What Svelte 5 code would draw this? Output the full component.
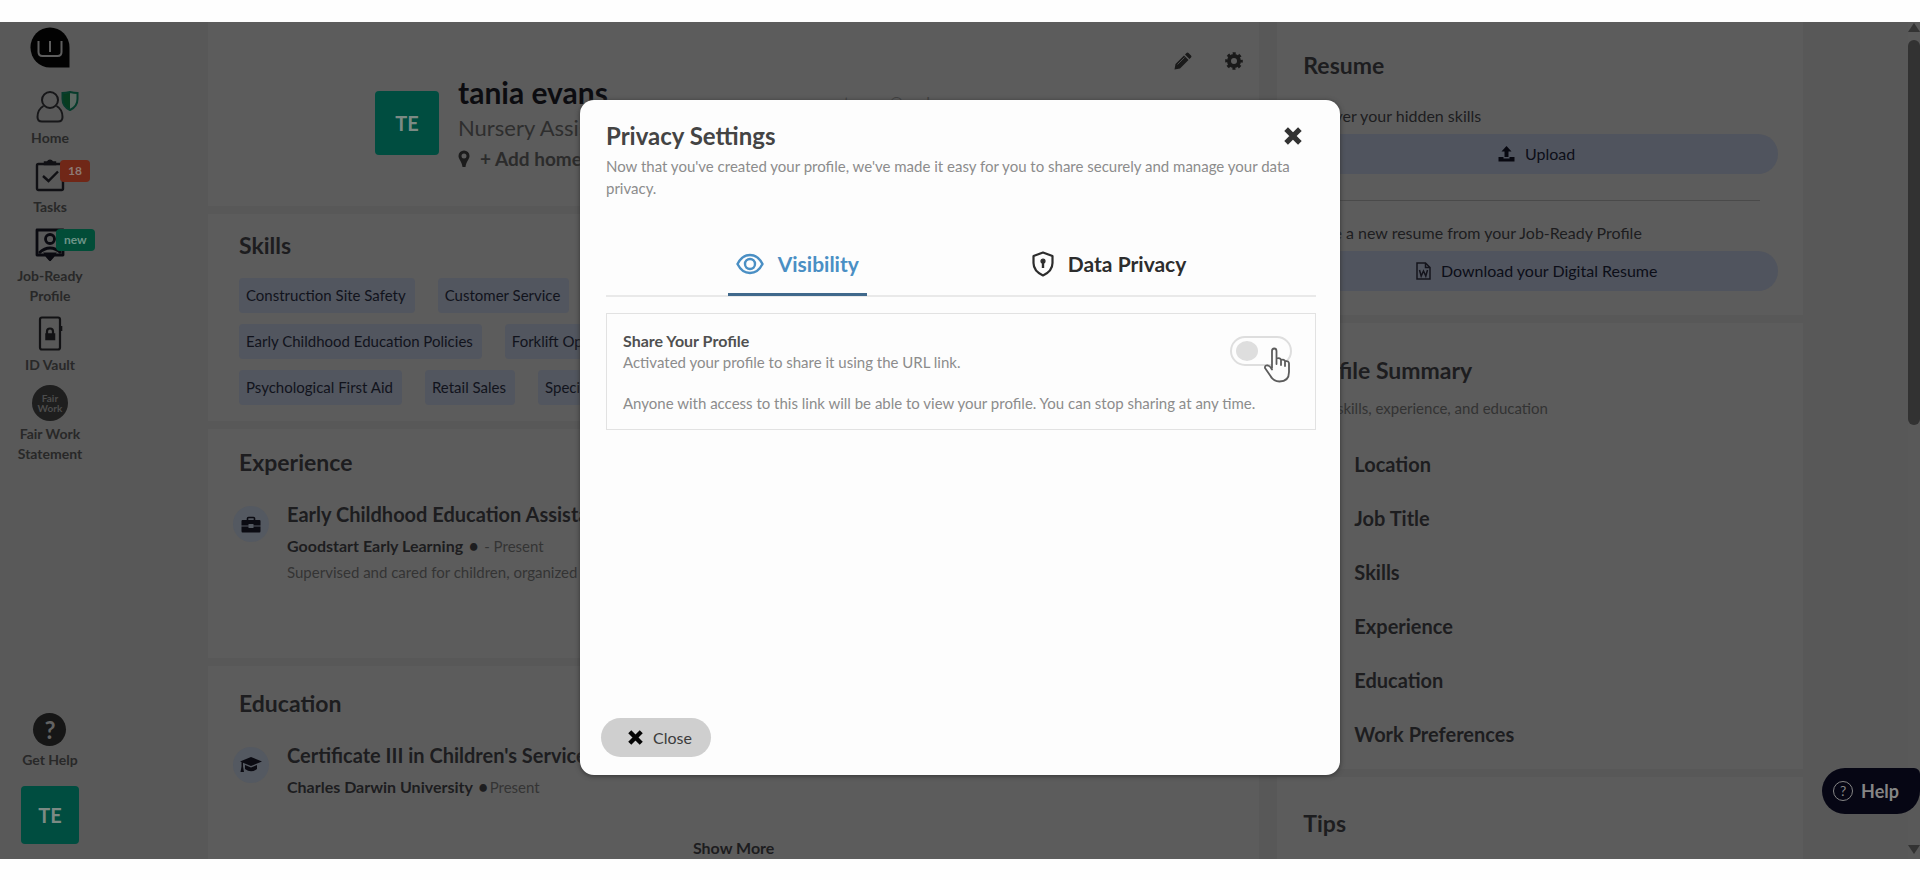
<script>
  let shareProfile = $state(false);
  let activeTab = $state('visibility');

  const skillRows = [
    ['Construction Site Safety', 'Customer Service'],
    ['Early Childhood Education Policies', 'Forklift Operation'],
    ['Psychological First Aid', 'Retail Sales', 'Special Needs Care']
  ];

  const summary = ['Location', 'Job Title', 'Skills', 'Experience', 'Education', 'Work Preferences'];
</script>

{#snippet cross(size)}
  <svg width={size} height={size} viewBox="0 0 16 16" aria-hidden="true">
    <path d="M3.500 3.500l9 9M12.500 3.500l-9 9" stroke="currentColor" stroke-width="4.600" stroke-linecap="square" />
  </svg>
{/snippet}

<div class="page">
  <div class="app">
    <nav class="sidebar">
      <a class="logo" href="#home" aria-label="Dashboard">
        <svg width="40" height="41" viewBox="0 0 40 41">
          <path d="M20 0.500a19.500 20 0 1 0 0 40h19.500v-20a19.500 20 0 0 0-19.500-20z" fill="#020202" />
          <path d="M8.500 14v11q0 4 4 4h15q4 0 4-4V14M20 14v11" fill="none" stroke="#5e5e5e" stroke-width="2" />
        </svg>
      </a>

      <a class="item" href="#home">
        <span class="icon">
          <svg width="28" height="34" viewBox="0 0 28 34" fill="none" stroke="#171719" stroke-width="2">
            <circle cx="14" cy="10" r="8" />
            <path d="M7.500 16C3 18.500 1.500 22 1.500 27q0 4.500 4.500 4.500h16q4.500 0 4.500-4.500c0-5-1.500-8.500-6-11" />
          </svg>
          <svg class="shield" width="18" height="20" viewBox="0 0 18 20">
            <path d="M1.500 2.500Q5 2.500 9 1.200V19Q1.500 15.500 1.500 8z" fill="#073c20" />
            <path d="M9 1.200q4 1.300 7.500 1.300V8Q16.500 15.500 9 19" fill="#5c6862" />
            <path d="M1.500 2Q5 2 9 1q4 1 7.500 1v6Q16.500 15.500 9 19 1.500 15.500 1.500 8z" fill="none" stroke="#073c2c" stroke-width="2" />
          </svg>
        </span>
        Home
      </a>

      <a class="item" href="#tasks">
        <span class="icon">
          <svg width="30" height="34" viewBox="0 0 30 34" fill="none" stroke="#101014" stroke-width="2.400">
            <rect x="2" y="5" width="26" height="26" rx="1.500" />
            <path d="M10 5V3.500h2.500Q15 0 17.500 3.500H20V5z" fill="#101014" />
            <path d="M8 17l5.500 5L23 12.500" />
          </svg>
          <span class="badge tasks">18</span>
        </span>
        Tasks
      </a>

      <a class="item" href="#profile">
        <span class="icon">
          <svg width="30" height="34" viewBox="0 0 30 34" fill="none" stroke="#0a0a10" stroke-width="2.800">
            <path d="M2 2h26v25H19l-4 4.500-4-4.500H2z" stroke-linejoin="round" />
            <circle cx="15" cy="11" r="4.500" />
            <path d="M4 25q11-10 22 0" />
            <path d="M11 26h8l-4 5z" fill="#0a0a10" />
          </svg>
          <span class="badge new">new</span>
        </span>
        Job-Ready<br />Profile
      </a>

      <a class="item" href="#vault">
        <span class="icon">
          <svg width="26" height="36" viewBox="0 0 26 36" fill="none" stroke="#121214" stroke-width="2.200">
            <rect x="3" y="1.500" width="20" height="32" rx="2" />
            <path d="M24 10v5" stroke-width="2.600" />
            <path d="M10 19v-3.500q0-3 3-3t3 3V19" />
            <rect x="9" y="18" width="8.500" height="5.500" fill="#121214" stroke-width="1.500" />
          </svg>
        </span>
        ID Vault
      </a>

      <a class="item" href="#fairwork">
        <span class="icon"><span class="fair">Fair<br />Work</span></span>
        Fair Work<br />Statement
      </a>

      <a class="item help-item" href="#help">
        <span class="icon"><span class="question">?</span></span>
        Get Help
      </a>

      <button class="avatar small">TE</button>
    </nav>

    <main class="content">
      <div class="profile-column">
        <header class="profile">
          <div class="avatar">TE</div>
          <div class="identity">
            <h1>tania evans</h1>
            <p class="role">Nursery Assistant</p>
            <p class="home">
              <svg width="12" height="18" viewBox="0 0 12 18" aria-hidden="true">
                <path d="M6 0.500a5.500 5.500 0 0 0-5.500 5.500C0.500 9 4 12 4.500 17h3C8 12 11.500 9 11.500 6A5.500 5.500 0 0 0 6 0.500zM6 3.500a2.500 2.500 0 1 1 0 5 2.500 2.500 0 0 1 0-5z" fill="#1c1c1c" fill-rule="evenodd" />
              </svg>
              + Add home location
            </p>
          </div>
          <p class="email">tevans@ondaws.com.au</p>
          <div class="actions">
            <button aria-label="Edit profile">
              <svg width="18" height="18" viewBox="0 0 18 18" fill="#1a1a1a">
                <path d="M0.500 17.500l1-5.500L10 3.500l4.500 4.500L6 16.500zM11 2.500l1.500-1.500q1-1 2 0l2.500 2.500q1 1 0 2L15.500 7z" />
                <path d="M3.500 12.500l7-7" stroke="#555" stroke-width="0.800" />
              </svg>
            </button>
            <button aria-label="Privacy settings">
              <svg width="18" height="18" viewBox="0 0 18 18">
                <circle cx="9" cy="9" r="5" fill="none" stroke="#1a1a1a" stroke-width="4" />
                <circle cx="9" cy="9" r="7.500" fill="none" stroke="#1a1a1a" stroke-width="2.600" stroke-dasharray="3 2.890" stroke-dashoffset="1.500" />
              </svg>
            </button>
          </div>
        </header>

        <section class="skills">
          <h2>Skills</h2>
          {#each skillRows as row}
            <div class="chips">
              {#each row as skill}
                <span class="chip">{skill}</span>
              {/each}
            </div>
          {/each}
        </section>

        <section class="experience">
          <h2>Experience</h2>
          <div class="entry">
            <span class="bubble">
              <svg width="20" height="17" viewBox="0 0 20 17">
                <path d="M6.500 4V2.500q0-1 1-1h5q1 0 1 1V4" fill="none" stroke="#0b0b12" stroke-width="1.600" />
                <path d="M1.500 4h17q1 0 1 1v4.500h-7V8h-5v1.500h-7V5q0-1 1-1zM0.500 10.500h7V12h5v-1.500h7V15q0 1.500-1 1.500h-17q-1 0-1-1.500z" fill="#0b0b12" />
              </svg>
            </span>
            <div>
              <h3>Early Childhood Education Assistant</h3>
              <p class="org">Goodstart Early Learning <b>•</b> <span>- Present</span></p>
              <p class="about">Supervised and cared for children, organized</p>
            </div>
          </div>
        </section>

        <section class="education">
          <h2>Education</h2>
          <div class="entry">
            <span class="bubble">
              <svg width="22" height="18" viewBox="0 0 22 18" fill="#0b0b12">
                <path d="M11 1L22 5.500 11 10 3 6.700v3.800l1 5.500H0.500l1-5.500V6L0 5.500z" />
                <path d="M5 9l6 2.500L17 9v4q-6 4.500-12 0z" />
              </svg>
            </span>
            <div>
              <h3>Certificate III in Children's Services</h3>
              <p class="org">Charles Darwin University <b>•</b><span>Present</span></p>
            </div>
          </div>
          <button class="more">Show More</button>
        </section>
      </div>

      <aside class="side-column">
        <section class="resume">
          <h2>Resume</h2>
          <p>Discover your hidden skills</p>
          <button class="wide">
            <svg width="17" height="16" viewBox="0 0 17 16" fill="#080810" aria-hidden="true">
              <path d="M8.500 0l5 5.500h-3V11h-4V5.500h-3zM0.500 11h5v1.500h6V11h5v4.500h-16z" />
            </svg>
            Upload
          </button>
          <hr />
          <p>Create a new resume from your Job-Ready Profile</p>
          <button class="wide">
            <svg width="15" height="18" viewBox="0 0 15 18" fill="none" stroke="#14141c" stroke-width="1.500" aria-hidden="true">
              <path d="M1 1h8.500L14 5.500V17H1zM9.500 1v4.500H14M3.500 8l1.700 6 2.300-5 2.300 5 1.700-6" />
            </svg>
            Download your Digital Resume
          </button>
        </section>

        <section class="summary">
          <h2>Profile Summary</h2>
          <p>Your skills, experience, and education</p>
          <ul>
            {#each summary as entry}
              <li>{entry}</li>
            {/each}
          </ul>
        </section>

        <section class="tips">
          <h2>Tips</h2>
        </section>
      </aside>
    </main>

    <div class="scrollbar">
      <span class="arrow up"></span>
      <span class="thumb"></span>
      <span class="arrow down"></span>
    </div>

    <button class="help">
      <span class="ring">?</span>
      Help
    </button>

    <div class="backdrop">
      <div class="modal" role="dialog" aria-modal="true" aria-labelledby="modal-title">
        <div class="modal-head">
          <div class="title-row">
            <h2 id="modal-title">Privacy Settings</h2>
            <button class="x" aria-label="Close dialog">{@render cross(18)}</button>
          </div>
          <p>Now that you've created your profile, we've made it easy for you to share securely and manage your data privacy.</p>
        </div>

        <div class="tabs" role="tablist">
          <button role="tab" class:active={activeTab === 'visibility'} aria-selected={activeTab === 'visibility'} onclick={() => (activeTab = 'visibility')}>
            <svg width="28" height="22" viewBox="0 0 28 22" fill="none" stroke="currentColor" stroke-width="2.400" aria-hidden="true">
              <path d="M1.500 11Q6 2 14 2t12.500 9Q22 20 14 20T1.500 11z" />
              <circle cx="14" cy="11" r="5" />
            </svg>
            Visibility
          </button>
          <button role="tab" class:active={activeTab === 'data'} aria-selected={activeTab === 'data'} onclick={() => (activeTab = 'data')}>
            <svg width="22" height="26" viewBox="0 0 22 26" fill="none" stroke="currentColor" stroke-width="2.200" aria-hidden="true">
              <path d="M11 1.500l9.500 3.500v7q0 8-9.500 12.500Q1.500 20 1.500 12V5z" stroke-linejoin="round" />
              <circle cx="11" cy="10" r="2" fill="currentColor" stroke-width="1.200" />
              <path d="M11 11v6" stroke-width="2.400" />
            </svg>
            Data Privacy
          </button>
        </div>

        <div class="share">
          <div class="share-row">
            <div>
              <label for="share-toggle">Share Your Profile</label>
              <p>Activated your profile to share it using the URL link.</p>
            </div>
            <div class="toggle">
              <input id="share-toggle" type="checkbox" bind:checked={shareProfile} />
              <svg class="pointer" width="28" height="36" viewBox="0 0 28 36" aria-hidden="true">
                <path d="M9 21V4q0-2.500 2.200-2.500T13.500 4v7.500q4-1 4.500 1.500 3.500-1 4 1.200 4-.7 4 2.300v8.500q0 9.500-9.500 9.500-6 0-9-5.500L2 21q-.5-3 3-2.500 2 .5 4 4M13.500 11.500V17M18 13v5M22 14.500V19" fill="#fdfdfd" stroke="#5c5c5c" stroke-width="1.800" stroke-linejoin="round" stroke-linecap="round" />
              </svg>
            </div>
          </div>
          <p class="note">Anyone with access to this link will be able to view your profile. You can stop sharing at any time.</p>
        </div>

        <button class="close">{@render cross(15)} Close</button>
      </div>
    </div>
  </div>
</div>

<style>
  :global(body) {
    margin: 0;
    background: #fefefe;
  }

  .page {
    box-sizing: border-box;
    height: 100vh;
    padding: 22px 0 21px;
    font-family: Lato, "Open Sans", sans-serif;
    font-size: 15px;
    line-height: 22px;
    color: #1d1d1f;
  }

  h1, h2, h3, p, ul {
    margin: 0;
    padding: 0;
  }

  button {
    border: 0;
    padding: 0;
    background: none;
    font: inherit;
    color: inherit;
    cursor: pointer;
  }

  a {
    color: inherit;
    text-decoration: none;
  }

  svg {
    display: block;
    flex: none;
  }

  .app {
    position: relative;
    display: flex;
    height: 100%;
    overflow: hidden;
    background: #585858;
  }

  /* left navigation */
  .sidebar {
    display: flex;
    flex-direction: column;
    align-items: center;
    gap: 10px;
    flex: none;
    box-sizing: border-box;
    width: 100px;
    padding: 5px 0 15px;
    background: #595959;
  }

  .logo {
    margin-bottom: 11px;
  }

  .item {
    display: flex;
    flex-direction: column;
    align-items: center;
    gap: 3px;
    text-align: center;
    font-size: 14px;
    font-weight: 700;
    line-height: 20px;
    color: #282828;
  }

  .icon {
    position: relative;
    display: flex;
    align-items: center;
    justify-content: center;
    height: 36px;
  }

  .shield {
    position: absolute;
    left: 25px;
    top: 2px;
  }

  .badge {
    position: absolute;
    top: 2px;
    left: 25px;
    border-radius: 4px;
    font-size: 12px;
    line-height: 22px;
  }

  .badge.tasks {
    padding: 0 8px;
    background: #702717;
    color: #8d7a75;
  }

  .badge.new {
    left: 21px;
    padding: 0 8px;
    background: #024d38;
    color: #6e9488;
  }

  .fair {
    display: flex;
    align-items: center;
    justify-content: center;
    width: 36px;
    height: 36px;
    border-radius: 50%;
    background: #1e1e1e;
    color: #4c4c4c;
    font-size: 10px;
    line-height: 10px;
  }

  .question {
    width: 33px;
    height: 33px;
    border-radius: 50%;
    background: #161616;
    color: #636363;
    font-size: 24px;
    line-height: 33px;
  }

  .help-item {
    margin-top: auto;
    margin-bottom: 6px;
  }

  .avatar {
    display: flex;
    align-items: center;
    justify-content: center;
    flex: none;
    width: 64px;
    height: 64px;
    border-radius: 4px;
    background: #004d40;
    color: #7c8a84;
    font-size: 20px;
    font-weight: 700;
  }

  .avatar.small {
    width: 58px;
    height: 58px;
  }

  /* page behind the dialog */
  .content {
    display: flex;
    flex: 1;
    gap: 18px;
    padding: 0 117px 0 108px;
  }

  .profile-column,
  .side-column {
    display: flex;
    flex-direction: column;
    gap: 8px;
  }

  .profile-column {
    flex: 2;
  }

  .side-column {
    flex: 1;
  }

  section,
  .profile {
    background: #5c5c5c;
  }

  h2 {
    font-size: 23px;
    font-weight: 700;
    line-height: 28px;
  }

  h3 {
    font-size: 20px;
    font-weight: 700;
    line-height: 28px;
  }

  .profile {
    position: relative;
    display: flex;
    gap: 19px;
    height: 115px;
    padding: 69px 16px 0 167px;
  }

  .identity {
    margin-top: -18px;
  }

  h1 {
    font-size: 30px;
    font-weight: 700;
    line-height: 38px;
    color: #0c0c10;
  }

  .role {
    font-size: 22px;
    line-height: 34px;
    color: #2e2e2e;
  }

  .home {
    display: flex;
    align-items: center;
    gap: 10px;
    font-size: 19px;
    font-weight: 700;
    line-height: 28px;
    color: #2b2b2b;
  }

  .email {
    margin: 0 auto 0 170px;
    font-size: 16px;
    color: #404040;
  }

  .actions {
    position: absolute;
    top: 30px;
    right: 16px;
    display: flex;
    gap: 33px;
  }

  .skills {
    height: 191px;
    padding: 17px 31px 0;
  }

  .skills h2 {
    margin-bottom: 19px;
  }

  .chips {
    display: flex;
    gap: 23px;
    margin-bottom: 11px;
  }

  .chip {
    padding: 0 9px 0 7px;
    border-radius: 4px;
    background: #52565f;
    font-size: 15px;
    line-height: 35px;
    color: #11131c;
  }

  .experience {
    height: 210px;
    padding: 19px 31px 0;
  }

  .entry {
    display: flex;
    gap: 18px;
    margin-top: 24px;
  }

  .bubble {
    display: flex;
    align-items: center;
    justify-content: center;
    flex: none;
    width: 36px;
    height: 36px;
    margin: 6px 0 0 -6px;
    border-radius: 50%;
    background: #545961;
  }

  .org {
    margin-top: 6px;
    font-size: 16px;
    font-weight: 700;
    line-height: 24px;
  }

  .org b {
    margin: 0 2px;
  }

  .org span {
    font-size: 15px;
    font-weight: 400;
    color: #343434;
  }

  .about {
    font-size: 15px;
    line-height: 28px;
    color: #343434;
  }

  .education {
    display: flex;
    flex-direction: column;
    flex: 1;
    padding: 23px 31px 0;
  }

  .more {
    margin: 38px auto 0;
    font-size: 16px;
    font-weight: 700;
  }

  .side-column h2 {
    padding-left: 8px;
  }

  .resume {
    height: 264px;
    padding: 29px 25px 0 18px;
  }

  .resume p {
    margin-top: 26px;
    font-size: 16px;
    line-height: 22px;
  }

  .resume hr + p {
    margin-top: 21px;
  }

  .wide {
    display: flex;
    align-items: center;
    justify-content: center;
    gap: 10px;
    width: 100%;
    height: 40px;
    margin-top: 7px;
    border-radius: 20px;
    background: #50545e;
    font-size: 16px;
    color: #0c0e18;
  }

  .resume hr {
    margin: 26px 18px 0;
    border: 0;
    border-top: 1px solid #4a4a4a;
  }

  .summary {
    height: 413px;
    padding: 33px 18px 0;
  }

  .summary p {
    margin-top: 13px;
    padding-left: 8px;
    color: #333;
  }

  .summary ul {
    margin: 18px 0 0 59px;
    list-style: none;
    font-size: 20px;
    font-weight: 700;
    line-height: 54px;
  }

  .tips {
    flex: 1;
    padding: 32px 18px 0;
  }

  .scrollbar {
    position: absolute;
    inset: 0 0 0 auto;
    display: flex;
    flex-direction: column;
    width: 12px;
    background: #595959;
  }

  .thumb {
    height: 46%;
    margin-top: 8px;
    border-radius: 6px;
    background: #323232;
  }

  .arrow {
    border: 6px solid transparent;
  }

  .up {
    border-top-width: 1px;
    border-bottom: 9px solid #333;
  }

  .down {
    margin: auto 0 5px;
    border-top: 9px solid #333;
    border-bottom-width: 0;
  }

  .help {
    position: absolute;
    right: 0;
    bottom: 45px;
    display: flex;
    align-items: center;
    gap: 8px;
    height: 46px;
    padding: 0 21px 0 11px;
    border-radius: 23px 6px 23px 23px;
    background: #060614;
    font-size: 18px;
    font-weight: 700;
    color: #858585;
  }

  .ring {
    width: 18px;
    border: 1px solid #858585;
    border-radius: 50%;
    font-size: 14px;
    font-weight: 400;
    line-height: 18px;
  }

  /* dialog */
  .backdrop {
    position: absolute;
    inset: 0;
    display: flex;
    align-items: flex-start;
    justify-content: center;
    padding-top: 78px;
  }

  .modal {
    display: flex;
    flex-direction: column;
    box-sizing: border-box;
    width: 760px;
    max-width: 90%;
    height: 675px;
    padding: 20px 24px 18px 26px;
    border-radius: 14px;
    background: #fdfdfd;
    box-shadow: 0 1px 5px #333;
  }

  .title-row {
    display: flex;
    align-items: center;
    justify-content: space-between;
    padding-right: 14px;
  }

  .modal h2 {
    font-size: 24px;
    line-height: 32px;
    color: #444;
  }

  .x {
    color: #333;
  }

  .modal-head p {
    padding: 3px 16px 0 0;
  }

  .modal p {
    font-size: 15px;
    color: #8c8c8c;
  }

  .tabs {
    display: flex;
    justify-content: center;
    gap: 157px;
    margin-top: 36px;
    border-bottom: 2px solid #e9e9e9;
  }

  .tabs button {
    display: flex;
    align-items: center;
    gap: 14px;
    height: 61px;
    margin-bottom: -1px;
    padding: 0 8px;
    border-bottom: 3px solid transparent;
    font-size: 21px;
    font-weight: 700;
    color: #2d2d2d;
  }

  .tabs button.active {
    border-bottom-color: #40698c;
    color: #4a8fc4;
  }

  .share {
    margin-top: 16px;
    padding: 17px 16px 15px;
    border: 1px solid #e2e2e2;
  }

  .share-row {
    display: flex;
    justify-content: space-between;
  }

  .share label {
    display: block;
    font-size: 16px;
    font-weight: 700;
    line-height: 20px;
    color: #505050;
  }

  .note {
    margin-top: 19px;
  }

  .toggle {
    position: relative;
    margin: 5px 7px 0 0;
  }

  .toggle input {
    display: block;
    appearance: none;
    box-sizing: border-box;
    width: 62px;
    height: 30px;
    margin: 0;
    padding: 3px 4px;
    border: 2px solid #dedede;
    border-radius: 15px;
  }

  .toggle input::before {
    content: "";
    display: block;
    width: 22px;
    height: 20px;
    border-radius: 50%;
    background: #dedede;
  }

  .toggle input:checked::before {
    margin-left: auto;
    background: #4a8fc4;
  }

  .pointer {
    position: absolute;
    top: 11px;
    right: 1px;
  }

  .close {
    display: flex;
    align-items: center;
    gap: 10px;
    align-self: flex-start;
    height: 39px;
    margin: auto 0 0 -5px;
    padding: 0 19px 0 27px;
    border-radius: 20px;
    background: #cfcfcf;
    font-size: 16px;
    color: #3c3c3c;
  }

  .close :global(svg) {
    color: #050505;
  }
</style>
